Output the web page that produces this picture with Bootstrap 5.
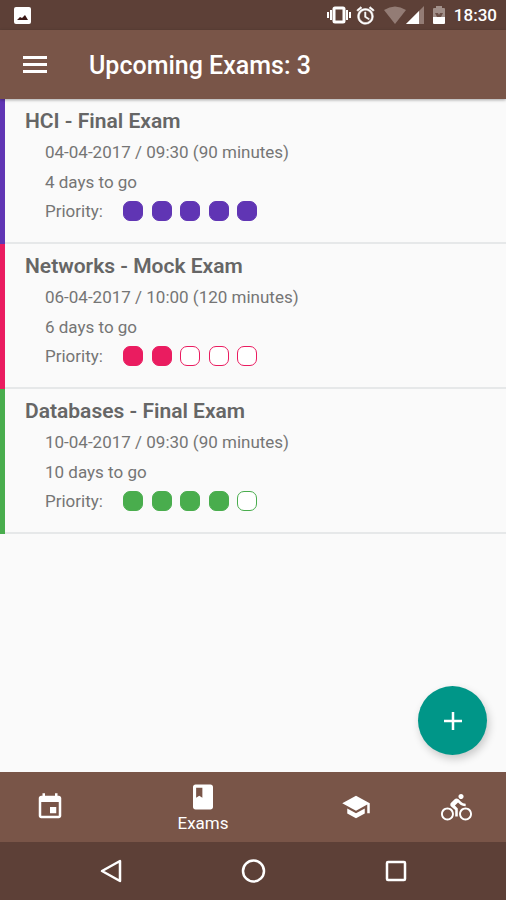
<!DOCTYPE html>
<html lang="en">
<head>
<meta charset="utf-8">
<meta name="viewport" content="width=device-width, initial-scale=1">
<title>Upcoming Exams</title>
<link href="https://cdn.jsdelivr.net/npm/bootstrap@5.3.0/dist/css/bootstrap.min.css" rel="stylesheet">
<style>
  body { font-family: Roboto, "Liberation Sans", sans-serif; background: #fafafa; color: #757575; }
  .system-bar { background: #5d4037; color: #fff; }
  .status { height: 30px; padding: 0 9px 0 13px; font-size: 17px; line-height: 32px; font-weight: 500; }
  .app-bar { background: #795548; color: #fff; height: 69px; padding: 0 20px; box-shadow: 0 1px 3px rgba(0,0,0,.35); z-index: 2; }
  .app-bar h1 { font-size: 25px; line-height: 32px; font-weight: 500; padding-top: 3px; margin-left: 39px; }
  .plain { background: none; border: 0; padding: 0; color: #fff; line-height: 0; }
  .exam { height: 145px; padding: 6px 16px 0 20px; border: 0; border-left: 5px solid var(--tone); background: transparent; color: inherit; box-shadow: inset 0 -2px 0 #e6e8e9; }
  .exam h2 { font-size: 21px; line-height: 32px; font-weight: 600; color: #666; margin: 0; }
  .exam p { font-size: 17px; line-height: 30px; margin: 0 0 0 20px; }
  .exam .priority { line-height: 28px; }
  .priority-label { width: 78px; }
  .dots { width: 134px; }
  .dot { width: 20px; height: 20px; border-radius: 7px; border: 1px solid var(--tone); background: #fff; }
  .dot.on { background: var(--tone); }
  .tone-purple { --tone: #6035b4; }
  .tone-pink { --tone: #ea1c60; }
  .tone-green { --tone: #49ad4d; }
  .fab { right: 19px; bottom: 17px; width: 69px; height: 69px; background: #009688; border-radius: 50%; box-shadow: 2px 4px 8px rgba(0,0,0,.2); }
  .tabs { background: #795548; height: 70px; }
  .tabs a { flex: 0 0 100px; color: #fff; font-size: 17px; line-height: 22px; text-decoration: none; }
  .tabs a.active { flex: 1 1 0; padding-top: 2px; }
  .sys-nav { height: 58px; padding: 0 41px; }
</style>
</head>
<body>
<div class="d-flex flex-column min-vh-100">
  <div class="system-bar status d-flex align-items-center justify-content-between">
    <svg width="19" height="19" viewBox="0 0 19 19" aria-hidden="true"><rect x="1" y="1" width="17" height="17" rx="2" fill="#fff"/><path d="M4 14l3-3 2 1 3-3 3 5z" fill="#3b1715"/></svg>
    <div class="d-flex align-items-center">
      <svg width="24" height="20" viewBox="0 0 24 20" aria-hidden="true"><path d="M1 7v6M4 5v10M20 5v10M23 7v6" stroke="#fff" stroke-width="2"/><rect x="7" y="3" width="10" height="14" rx="1" fill="none" stroke="#fff" stroke-width="3"/></svg>
      <svg class="ms-1" width="21" height="21" viewBox="0 0 24 24" fill="#fff" stroke="#fff" stroke-width=".6" aria-hidden="true"><path d="M22 5.720l-4.600-3.860-1.290 1.530 4.600 3.860L22 5.720zM7.880 3.390L6.600 1.860 2 5.710l1.290 1.530 4.590-3.850zM12.500 8H11v6l4.750 2.850.75-1.230-4-2.370V8zM12 4c-4.970 0-9 4.030-9 9s4.020 9 9 9a9 9 0 0 0 0-18zm0 16c-3.870 0-7-3.130-7-7s3.130-7 7-7 7 3.130 7 7-3.130 7-7 7z"/></svg>
      <svg class="ms-2" width="22" height="18" viewBox="0 0 22 18" aria-hidden="true"><path d="M0 4Q11 -3 22 4L11 18z" fill="#937c75"/></svg>
      <svg width="18" height="18" viewBox="0 0 18 18" aria-hidden="true"><path d="M18 0v18H0z" fill="#937c75"/><path d="M13 5v13H0z" fill="#fff"/></svg>
      <svg class="mx-2" width="14" height="20" viewBox="0 0 14 20" aria-hidden="true"><path d="M4 1h6v2h2q1 0 1 1v8H1V4q0-1 1-1h2z" fill="#a18f89"/><path d="M1 12h12v6q0 1-1 1H2q-1 0-1-1z" fill="#fff"/><path d="M3 8h3l1 2 1-2h3l-2 4H5z" fill="#6b5048"/></svg>
      <span>18:30</span>
    </div>
  </div>
  <header class="app-bar d-flex align-items-center position-relative">
    <button type="button" class="plain" aria-label="Open menu"><svg width="30" height="30" viewBox="0 0 30 30"><path d="M3 7.500h24M3 14.500h24M3 21.500h24" stroke="#fff" stroke-width="3"/></svg></button>
    <h1 class="mb-0">Upcoming Exams: 3</h1>
  </header>
  <main class="flex-grow-1 position-relative">
    <ul class="list-group rounded-0">
      <li class="exam list-group-item tone-purple">
        <h2>HCI - Final Exam</h2>
        <p>04-04-2017 / 09:30 (90 minutes)</p>
        <p>4 days to go</p>
        <p class="priority d-flex align-items-center"><span class="priority-label">Priority:</span><span class="dots d-flex justify-content-between" role="img" aria-label="5 of 5"><span class="dot on"></span><span class="dot on"></span><span class="dot on"></span><span class="dot on"></span><span class="dot on"></span></span></p>
      </li>
      <li class="exam list-group-item tone-pink">
        <h2>Networks - Mock Exam</h2>
        <p>06-04-2017 / 10:00 (120 minutes)</p>
        <p>6 days to go</p>
        <p class="priority d-flex align-items-center"><span class="priority-label">Priority:</span><span class="dots d-flex justify-content-between" role="img" aria-label="2 of 5"><span class="dot on"></span><span class="dot on"></span><span class="dot"></span><span class="dot"></span><span class="dot"></span></span></p>
      </li>
      <li class="exam list-group-item tone-green">
        <h2>Databases - Final Exam</h2>
        <p>10-04-2017 / 09:30 (90 minutes)</p>
        <p>10 days to go</p>
        <p class="priority d-flex align-items-center"><span class="priority-label">Priority:</span><span class="dots d-flex justify-content-between" role="img" aria-label="4 of 5"><span class="dot on"></span><span class="dot on"></span><span class="dot on"></span><span class="dot on"></span><span class="dot"></span></span></p>
      </li>
    </ul>
    <button type="button" class="plain fab position-absolute" aria-label="Add exam"><svg width="18" height="18" viewBox="0 0 18 18"><path d="M9 0v18M0 9h18" stroke="#fff" stroke-width="2.500"/></svg></button>
  </main>
  <nav class="tabs d-flex" aria-label="Sections">
    <a href="#calendar" class="d-flex align-items-center justify-content-center" aria-label="Calendar"><svg width="30" height="30" viewBox="0 0 24 24" fill="#fff"><path d="M17 12h-5v5h5v-5zM16 1v2H8V1H6v2H5c-1.110 0-1.990.9-1.990 2L3 19c0 1.100.89 2 2 2h14c1.100 0 2-.9 2-2V5c0-1.100-.9-2-2-2h-1V1h-2zm3 18H5V8h14v11z"/></svg></a>
    <a href="#exams" class="active d-flex flex-column align-items-center justify-content-center" aria-current="page"><svg width="30" height="30" viewBox="0 0 24 24" fill="#fff"><path fill-rule="evenodd" d="M18 2H6c-1.100 0-2 .9-2 2v16c0 1.100.9 2 2 2h12c1.100 0 2-.9 2-2V4c0-1.100-.9-2-2-2zM6.500 4.500h5v8L9 11l-2.500 1.500z"/></svg>Exams</a>
    <a href="#grades" class="d-flex align-items-center justify-content-center" aria-label="Grades"><svg width="30" height="30" viewBox="0 0 24 24" fill="#fff"><path d="M5 13.180v4L12 21l7-3.820v-4L12 17l-7-3.820zM12 3L1 9l11 6 9-4.910V17h2V9L12 3z"/></svg></a>
    <a href="#activities" class="d-flex align-items-center justify-content-center" aria-label="Activities"><svg width="31" height="31" viewBox="0 0 24 24" fill="#fff"><path d="M15.500 5.500c1.100 0 2-.9 2-2s-.9-2-2-2-2 .9-2 2 .9 2 2 2zM5 12c-2.800 0-5 2.200-5 5s2.200 5 5 5 5-2.200 5-5-2.200-5-5-5zm0 8.500c-1.900 0-3.500-1.600-3.500-3.500s1.600-3.500 3.500-3.500 3.500 1.600 3.500 3.500-1.600 3.500-3.500 3.500zm5.800-10l2.400-2.400.8.8c1.300 1.300 3 2.100 5.100 2.100V9c-1.500 0-2.700-.6-3.600-1.500l-1.900-1.900c-.5-.4-1-.6-1.600-.6s-1.100.2-1.400.6L7.800 8.400c-.4.4-.6.9-.6 1.400 0 .6.2 1.100.6 1.400L11 14v5h2v-6.200l-2.200-2.300zM19 12c-2.800 0-5 2.200-5 5s2.200 5 5 5 5-2.200 5-5-2.200-5-5-5zm0 8.500c-1.900 0-3.500-1.600-3.500-3.500s1.600-3.500 3.500-3.500 3.500 1.600 3.500 3.500-1.600 3.500-3.500 3.500z"/></svg></a>
  </nav>
  <div class="system-bar sys-nav d-flex">
    <button type="button" class="plain flex-fill" aria-label="Back"><svg width="24" height="26" viewBox="0 0 24 26"><path d="M3 13L21 3v20z" fill="none" stroke="#fff" stroke-width="2.500" stroke-linejoin="round"/></svg></button>
    <button type="button" class="plain flex-fill" aria-label="Home"><svg width="26" height="26" viewBox="0 0 26 26"><circle cx="13.500" cy="13" r="10.500" fill="none" stroke="#fff" stroke-width="2.500"/></svg></button>
    <button type="button" class="plain flex-fill" aria-label="Recent apps"><svg width="24" height="24" viewBox="0 0 24 24"><rect x="4" y="3" width="18" height="18" rx="1" fill="none" stroke="#fff" stroke-width="2.500"/></svg></button>
  </div>
</div>
<script src="https://cdn.jsdelivr.net/npm/bootstrap@5.3.0/dist/js/bootstrap.bundle.min.js"></script>
</body>
</html>
